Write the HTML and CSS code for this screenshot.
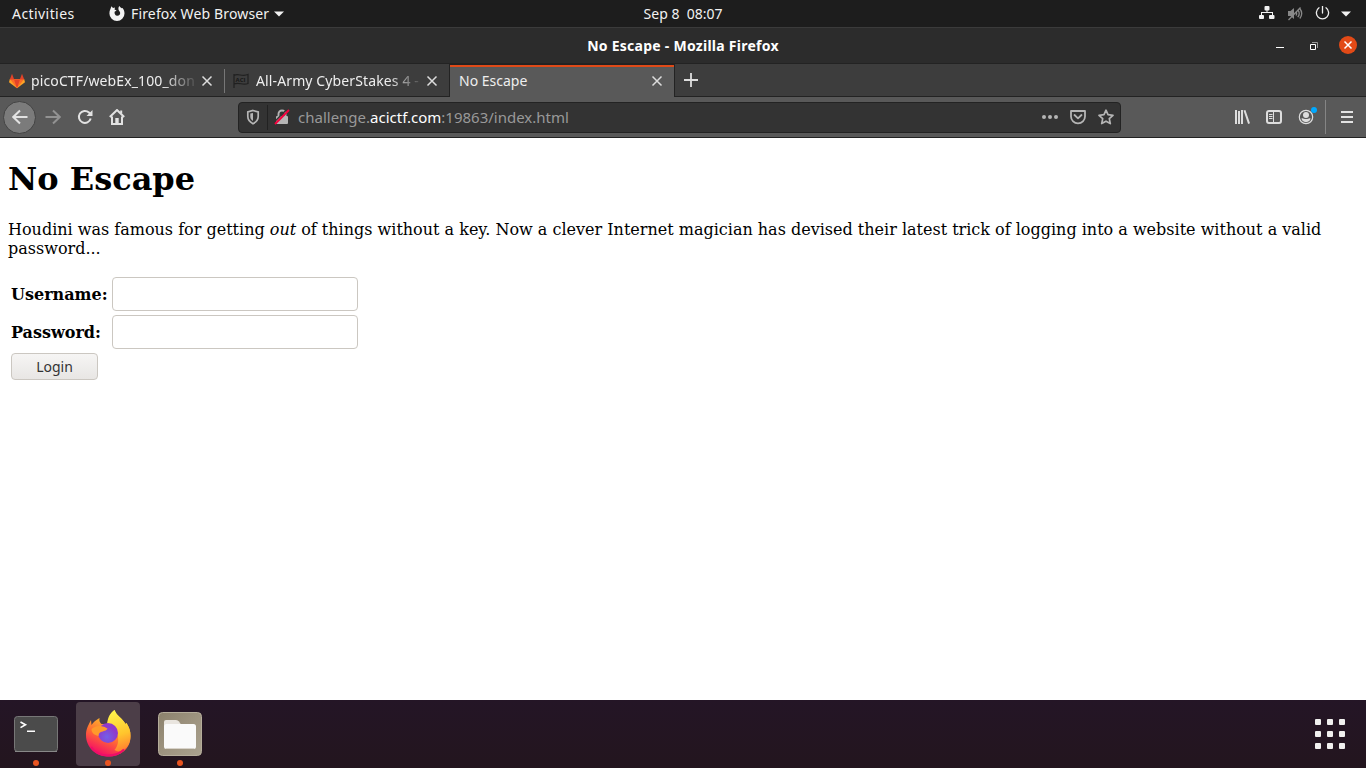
FILE: index.html
```html
<!DOCTYPE html>
<html lang="en">
<head>
<meta charset="utf-8">
<title>No Escape - Mozilla Firefox</title>
<link rel="stylesheet" href="styles.css">
</head>
<body>
<div class="desktop">
  <header class="topbar">
    <div class="topbar-left">
      <span class="activities">Activities</span>
      <svg class="app-icon" width="16" height="16" viewBox="0 0 16 16"><path fill="#f2f2f2" d="M2.400 .3 4 2 6 1.600 5.500 3.500 7.600 4.500 5.600 5.700C5.200 7.900 6.400 9.700 8.200 9.700c2.200 0 3.300-1.700 2.900-3.300-.3-1.200-1.400-1.500-1.600-2.900C9.300 1.700 9.700.6 10.600 0c.2 1.200 1.200 1.600 2.200 2.300l.7-.4c1.400 1.600 2 3.300 2 5.500A7.600 7.600 0 0 1 8 15 7.600 7.600 0 0 1 .4 7.400C.4 4.500 1.700 2.800 2.400.3z"/></svg>
      <span class="app-name">Firefox Web Browser</span>
      <svg width="10" height="6" viewBox="0 0 10 6"><path fill="#f2f2f2" d="M0 .5h10L5 5.500z"/></svg>
    </div>
    <div class="clock">Sep 8&nbsp; 08:07</div>
    <div class="topbar-right">
      <svg width="16" height="16" viewBox="0 0 16 16" fill="#f2f2f2"><rect x="5.500" y="0" width="5" height="4.500" rx="1"/><rect x="0" y="9" width="5" height="4" rx="1"/><rect x="10" y="9" width="5.500" height="4" rx="1"/><path d="M7.500 4h1v2H14v3h-1V7H3v2H2V6h5.500z"/></svg>
      <svg width="16" height="16" viewBox="0 0 16 16"><path fill="#888" d="M1 5h2.500L7 2v11L3.500 10H1z"/><path fill="none" stroke="#888" stroke-width="1.300" d="M1.500 14 13.500 1.500M9 6c.8 1 .8 2.300 0 3.500M10.800 4c1.700 2 1.700 5 0 7.200M12.800 2.500c2.300 3 2.300 7 0 10"/></svg>
      <svg width="16" height="16" viewBox="0 0 16 16"><path fill="none" stroke="#eee" stroke-width="1.300" stroke-linecap="round" d="M7.500 0v7M4 1.800a6.100 6.100 0 1 0 7 0"/></svg>
      <svg class="arrow" width="10" height="6" viewBox="0 0 10 6"><path fill="#f2f2f2" d="M0 .5h10L5 5.500z"/></svg>
    </div>
  </header>

  <div class="titlebar">
    <span class="window-title">No Escape - Mozilla Firefox</span>
    <div class="window-buttons">
      <svg width="8" height="10" viewBox="0 0 8 10"><path fill="#fff" d="M0 6h8v1H0z"/></svg>
      <svg width="8" height="8" viewBox="0 0 8 8" fill="none"><path stroke="#999" d="M2 .5h5.500V6"/><path stroke="#fff" d="M.5 2.500h5v5h-5z"/></svg>
      <svg width="20" height="20" viewBox="0 0 20 20"><circle cx="10" cy="9" r="9" fill="#e24a17"/><path stroke="#fff" stroke-width="1.500" d="m6.500 5.500 7 7m0-7-7 7"/></svg>
    </div>
  </div>

  <nav class="tabs">
    <div class="tab">
      <svg width="16" height="16" viewBox="0 0 16 16"><path fill="#fca326" d="M.8 6 0 9.300 8 15.300l8-6L15.200 6z"/><path fill="#fc6d26" d="M.8 6 8 15.300 15.200 6z"/><path fill="#e24329" d="M5 6.500 8 15.300l3-8.800zM.8 6.500 3 .8l2.200 5.700zm14.400 0L13 .8l-2.200 5.700z"/></svg>
      <span class="tab-label label-pico">picoCTF/webEx_100_don</span>
      <svg class="close" width="12" height="12" viewBox="0 0 12 12"><path d="m1.500 1.500 9 9m0-9-9 9"/></svg>
    </div>
    <div class="tab tab-divided">
      <svg width="16" height="16" viewBox="0 0 16 16"><path fill="none" stroke="#202020" stroke-width="1.200" d="M1 1v14M1 2.500c4-2.500 8 1.500 14-1v9c-5 2-9-1.500-14 .5"/><text class="flag-text" x="2.500" y="8.500">ACI</text></svg>
      <span class="tab-label label-army">All-Army CyberStakes 4 -</span>
      <svg class="close" width="12" height="12" viewBox="0 0 12 12"><path d="m1.500 1.500 9 9m0-9-9 9"/></svg>
    </div>
    <div class="tab tab-active">
      <span class="tab-label label-escape">No Escape</span>
      <svg class="close" width="12" height="12" viewBox="0 0 12 12"><path d="m1.500 1.500 9 9m0-9-9 9"/></svg>
    </div>
    <svg class="new-tab" width="14" height="14" viewBox="0 0 14 14"><path stroke="#ddd" stroke-width="1.800" d="M7 0v14M0 7h14"/></svg>
  </nav>

  <div class="toolbar">
    <span class="back"><svg width="16" height="16" viewBox="0 0 16 16" class="line"><path d="M15.500 8H1.500M8 1.500 1.300 8 8 14.500"/></svg></span>
    <svg width="16" height="16" viewBox="0 0 16 16" class="line dim"><path d="M.5 8h14M8 1.500 14.700 8 8 14.500"/></svg>
    <svg width="16" height="16" viewBox="0 0 16 16" class="line"><path d="M13.700 9.500A6 6 0 1 1 12 3.500L14 5.500"/><path class="solid" d="M15.500 1v6H9.500z"/></svg>
    <svg width="16" height="16" viewBox="0 0 16 16" class="line"><path d="m.8 8 7.200-7 7.200 7M3 7.500V15h10V7.500"/><path class="solid" d="M6.300 15V9h3.400v6zM11.200 1.500h2v3h-2z"/></svg>
    <div class="urlbar">
      <span class="shield"><svg width="16" height="16" viewBox="0 0 16 16"><path fill="none" stroke="#b5b5b5" stroke-width="1.700" d="M8 1.500 13.200 3v4.500c0 3.500-2 5.500-5.200 7.200-3.200-1.700-5.200-3.700-5.200-7.200V3z"/><path fill="#b5b5b5" d="M8 4v8C6 10.800 5.300 9.500 5.300 7.500v-3z"/></svg></span>
      <svg class="lock" width="16" height="16" viewBox="0 0 16 16"><rect x="2" y="7" width="12" height="8" rx="1" fill="#b5b5b5"/><path fill="none" stroke="#b5b5b5" stroke-width="1.900" d="M4.500 7V5a3.500 3.500 0 0 1 7 0v2"/><path stroke="#333" stroke-width="1.500" d="M0 13.300 13.300 0"/><path stroke="#f5003d" stroke-width="1.900" d="m1 15 14-14"/></svg>
      <span class="url">challenge.<b>acictf.com</b>:19863/index.html</span>
      <div class="url-actions">
        <svg width="16" height="16" viewBox="0 0 16 16" fill="#b5b5b5"><circle cx="2" cy="8" r="2"/><circle cx="8" cy="8" r="2"/><circle cx="14" cy="8" r="2"/></svg>
        <svg width="16" height="16" viewBox="0 0 16 16" fill="none" stroke="#b5b5b5" stroke-width="1.800" stroke-linecap="round" stroke-linejoin="round"><path d="M1 2h14v5.500a7 6.800 0 0 1-14 0zM4.500 6 8 9.300 11.500 6"/></svg>
        <svg width="16" height="16" viewBox="0 0 16 16" fill="none" stroke="#b5b5b5" stroke-width="1.700" stroke-linejoin="round"><path d="m8 1.200 2 4.500 5 .6-3.700 3.300 1 5L8 12.200l-4.300 2.400 1-5L1 6.300l5-.6z"/></svg>
      </div>
    </div>
    <div class="toolbar-right">
      <svg width="16" height="16" viewBox="0 0 16 16" fill="#ddd"><path d="M1 1h2v14H1zM4 2h2v13H4zM7 1h2v14H7zM9.500 1.500l1.900-.5 4.600 13.300-1.900.7z"/></svg>
      <svg width="16" height="16" viewBox="0 0 16 16" fill="none" stroke="#ddd"><rect x="1" y="2" width="14" height="12" rx="2" stroke-width="2"/><path d="M7.500 3v10M3 5.500h3.500M3 7.500h3.500M3 9.500h3.500"/></svg>
      <span class="account"><svg width="16" height="16" viewBox="0 0 16 16"><circle cx="8" cy="8" r="6.700" fill="none" stroke="#ddd" stroke-width="1.200"/><circle cx="8" cy="6" r="3" fill="#ddd"/><path fill="#ddd" d="M3.500 9.300c1.500-.5 2.500.7 4.500.7s3-1.200 4.500-.7c0 2.200-2 3.900-4.500 3.900s-4.500-1.700-4.500-3.900z"/></svg><i class="badge"></i></span>
      <span class="menu"><svg width="12" height="12" viewBox="0 0 12 12" fill="#e2e2e2"><path d="M0 0h12v2H0zM0 5h12v2H0zM0 10h12v2H0z"/></svg></span>
    </div>
  </div>

  <main class="page">
    <h1>No Escape</h1>
    <p>Houdini was famous for getting <em>out</em> of things without a key. Now a clever Internet magician has devised their latest trick of logging into a website without a valid password...</p>
    <form>
      <table>
        <tr><td><label for="user">Username:</label></td><td><input id="user" type="text"></td></tr>
        <tr><td><label for="pass">Password:</label></td><td><input id="pass" type="password"></td></tr>
        <tr><td colspan="2"><button type="button">Login</button></td></tr>
      </table>
    </form>
  </main>

  <footer class="dock">
    <div class="dock-item">
      <svg width="64" height="64" viewBox="0 0 64 64"><rect x="10.500" y="14.500" width="43" height="35" rx="3" fill="#4b4b4b" stroke="#777"/><path d="M11 49.500h42" stroke="#888"/><path fill="none" stroke="#fff" stroke-width="1.600" d="m16.500 20 5 2.800-5 2.800M23 29.300h8"/></svg><i class="dot"></i>
    </div>
    <div class="dock-item dock-active">
      <svg width="64" height="64" viewBox="0 0 64 64">
        <defs>
          <linearGradient id="fire" x1=".8" y1=".1" x2=".4" y2="1"><stop offset="0" stop-color="#fff04a"/><stop offset=".25" stop-color="#ffb62b"/><stop offset=".6" stop-color="#ff6a34"/><stop offset="1" stop-color="#f40b67"/></linearGradient>
          <linearGradient id="wing" x1=".4" y1="0" x2=".6" y2="1"><stop offset="0" stop-color="#fff44b"/><stop offset=".6" stop-color="#ffc52d"/><stop offset="1" stop-color="#ff8030"/></linearGradient>
          <radialGradient id="globe" cx=".45" cy=".7"><stop offset="0" stop-color="#7260e8"/><stop offset="1" stop-color="#8f39cb"/></radialGradient>
        </defs>
        <path fill="url(#fire)" d="M10 33c0-6 2-9 5-15l.5 5c2-3 4-4.500 8-7-.5 3 .5 5 2 6 3 0 5 0 7 1 0-7 2-12 6-15 2 6 8 8 11 14l1-1c3 5 4 8 4 13 0 13-10 20.500-22 20.500S10 46 10 33z"/>
        <path fill="url(#wing)" d="M31 22c1-7 3-11 7.500-14 2 6 8 8 11 14l1-1c3 5 4 8 4 13 0 6-2 10-6 13-4 3-7 3-10 1 5-5 7-19-7.500-26z"/>
        <path fill="none" stroke="#ee0e69" stroke-width="2" d="M15 45c4 6 10 8.500 17 8.500 6 0 12-2 16-6"/>
        <circle cx="32" cy="31" r="10" fill="url(#globe)"/>
        <path fill="#ff9a2b" d="M15.500 27c3-2.500 7-3.500 11-2.500 2 0 3.500 1.500 5 2-1 2.500-4 2.500-6.500 3.500-2 1-2.500 2.500-2.500 4-4-1-7-3-7-7z"/>
      </svg><i class="dot"></i>
    </div>
    <div class="dock-item">
      <svg width="64" height="64" viewBox="0 0 64 64"><defs><linearGradient id="cabinet" x2="1" y2="1"><stop stop-color="#8b816c"/><stop offset=".5" stop-color="#9d937f"/><stop offset="1" stop-color="#aaa28f"/></linearGradient></defs><rect x="10.500" y="10.500" width="43" height="43" rx="4" fill="url(#cabinet)" stroke="#b5ad9b"/><path fill="#e9e5df" d="M16 20q0-2 2-2h10q2 0 3 1.500l2 3V31H16z"/><rect x="16" y="22" width="32" height="25" rx="2.500" fill="#fafafa"/><path d="M18 46.500h28" stroke="#d8d3ca"/></svg><i class="dot"></i>
    </div>
    <div class="apps"><i></i><i></i><i></i><i></i><i></i><i></i><i></i><i></i><i></i></div>
  </footer>
</div>
</body>
</html>
```
FILE: styles.css
```css
* { box-sizing: border-box; }
body { margin: 0; overflow: hidden; background: #fff; }
svg { display: block; flex: none; }
.desktop { width: 1366px; height: 768px; display: flex; flex-direction: column; font: 14px/20px "Noto Sans", sans-serif; white-space: nowrap; }

.topbar { height: 28px; flex: none; display: grid; grid-template-columns: 1fr 80px 1fr; background: #1d1d1d; border-bottom: 1px solid #3b3b3b; color: #f2f2f2; align-items: center; }
.topbar-left { display: flex; align-items: center; padding-left: 12px; }
.activities { width: 97px; letter-spacing: .43px; }
.app-name { width: 143px; margin-left: 6px; letter-spacing: .15px; }
.clock { text-align: center; }
.topbar-right { display: flex; align-items: center; justify-content: flex-end; gap: 12px; padding-right: 15px; }
.arrow { margin-left: -2px; }

.titlebar { height: 35px; flex: none; display: grid; grid-template-columns: 1fr 220px 1fr; align-items: center; background: #2c2c2c; color: #fff; padding-top: 1px; }
.window-title { grid-column: 2; text-align: center; font-weight: 700; letter-spacing: .26px; }
.window-buttons { display: flex; justify-content: flex-end; align-items: center; gap: 20px; padding-right: 8px; }
.window-buttons svg:first-child { margin-right: 6px; }

.tabs { height: 34px; flex: none; display: flex; background: #3d3d3d; border-top: 1px solid #232323; border-bottom: 1px solid #232323; color: #eee; align-items: flex-start; }
.tab { width: 224px; height: 33px; display: flex; align-items: center; padding: 0 11px 0 9px; gap: 6px; }
.tab-label { flex: 1; min-width: 0; }
.label-pico, .label-army { -webkit-mask-image: linear-gradient(90deg, #000 132px, transparent 168px); mask-image: linear-gradient(90deg, #000 132px, transparent 168px); }
.label-pico { letter-spacing: .12px; }
.label-army { margin-left: 1px; letter-spacing: .12px; }
.tab-divided { width: 225px; background: linear-gradient(#777, #777) 0 50% / 1px 24px no-repeat; }
.tab-active { width: 226px; background: #595959; border: solid #232323; border-width: 1px 1px 0; box-shadow: inset 0 2px #e04a18; }
.close { fill: none; stroke: #ddd; stroke-width: 1.5; }
.flag-text { font: 700 6px "Open Sans", sans-serif; fill: #181818; }
.new-tab { margin: 9px 0 0 9px; }

.toolbar { height: 41px; flex: none; display: flex; align-items: center; background: #595959; border-bottom: 1px solid #222; padding-left: 3px; }
.back { width: 33px; height: 33px; margin-right: 9px; border-radius: 50%; background: #7b7b7b; border: 1px solid #434343; display: grid; place-items: center; }
.line { fill: none; stroke: #e2e2e2; stroke-width: 2; margin-right: 16px; }
.back .line { margin: 0; }
.solid { fill: #e2e2e2; stroke: none; }
.dim { stroke: #929292; }
.urlbar { width: 883px; height: 31px; margin-left: 97px; display: flex; align-items: center; background: #333; border: 1px solid #232323; border-radius: 4px; color: #999; }
.shield { width: 29px; height: 25px; padding: 4px 0 0 6px; border-right: 1px solid #222; }
.lock { margin: 0 8px 0 6px; }
.url { font-size: 15px; }
.url b { color: #fff; font-weight: 400; }
.url-actions { display: flex; gap: 12px; margin-left: auto; padding-right: 6px; }
.toolbar-right { margin-left: auto; display: flex; align-items: center; gap: 16px; }
.account { position: relative; }
.badge { position: absolute; width: 6px; height: 6px; right: -3px; top: -2px; border-radius: 50%; background: #00a9ff; }
.menu { height: 34px; padding: 11px 13px 0 15px; border-left: 1px solid #858585; margin-left: -5px; }

.page { flex: 1; padding: 0 8px; overflow: hidden; white-space: normal; color: #000; font: 16px/19px "DejaVu Serif", serif; }
h1 { margin: 22px 0; font-size: 32px; line-height: 38px; }
p { margin: 0 0 16px; }
table { border-spacing: 2px; }
td { padding: 1px; }
label { font-weight: 700; }
input, button { display: block; margin: 0; border: 1px solid #cbc7c1; border-radius: 4px; }
input { width: 246px; height: 34px; background: #fff; }
button { width: 87px; height: 27px; padding: 0; font: 14px/20px "Noto Sans", sans-serif; color: #333; background: linear-gradient(#f6f5f4, #e8e6e4); }

.dock { height: 68px; flex: none; display: flex; align-items: flex-start; gap: 8px; padding: 2px 4px; background: linear-gradient(#241526, #23151e); }
.dock-item { width: 64px; height: 64px; position: relative; border-radius: 4px; }
.dock-active { background: #4c3e48; }
.dot { position: absolute; left: 29px; bottom: 0; width: 6px; height: 6px; border-radius: 50%; background: #e95420; }
.apps { display: grid; grid-template-columns: repeat(3, 6px); gap: 6px; margin: 17px 17px 0 auto; }
.apps i { height: 6px; border-radius: 1px; background: #f1f0ef; }
```
